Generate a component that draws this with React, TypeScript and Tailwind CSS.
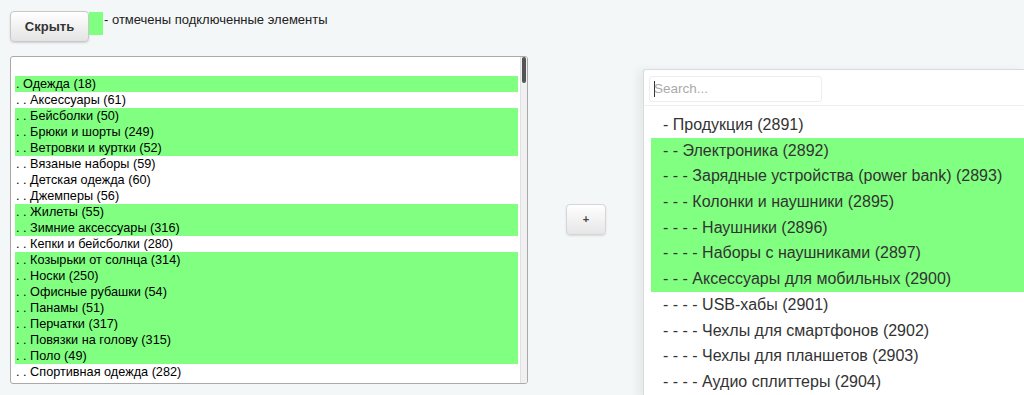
import React from 'react';

const leftItems: { label: string; on: boolean }[] = [
  { label: '. Одежда (18)', on: true },
  { label: '. . Аксессуары (61)', on: false },
  { label: '. . Бейсболки (50)', on: true },
  { label: '. . Брюки и шорты (249)', on: true },
  { label: '. . Ветровки и куртки (52)', on: true },
  { label: '. . Вязаные наборы (59)', on: false },
  { label: '. . Детская одежда (60)', on: false },
  { label: '. . Джемперы (56)', on: false },
  { label: '. . Жилеты (55)', on: true },
  { label: '. . Зимние аксессуары (316)', on: true },
  { label: '. . Кепки и бейсболки (280)', on: false },
  { label: '. . Козырьки от солнца (314)', on: true },
  { label: '. . Носки (250)', on: true },
  { label: '. . Офисные рубашки (54)', on: true },
  { label: '. . Панамы (51)', on: true },
  { label: '. . Перчатки (317)', on: true },
  { label: '. . Повязки на голову (315)', on: true },
  { label: '. . Поло (49)', on: true },
  { label: '. . Спортивная одежда (282)', on: false },
];

const rightItems: { label: string; on: boolean }[] = [
  { label: '- Продукция (2891)', on: false },
  { label: '- - Электроника (2892)', on: true },
  { label: '- - - Зарядные устройства (power bank) (2893)', on: true },
  { label: '- - - Колонки и наушники (2895)', on: true },
  { label: '- - - - Наушники (2896)', on: true },
  { label: '- - - - Наборы с наушниками (2897)', on: true },
  { label: '- - - Аксессуары для мобильных (2900)', on: true },
  { label: '- - - - USB-хабы (2901)', on: false },
  { label: '- - - - Чехлы для смартфонов (2902)', on: false },
  { label: '- - - - Чехлы для планшетов (2903)', on: false },
  { label: '- - - - Аудио сплиттеры (2904)', on: false },
];

export default function App() {
  return (
    <div
      className="w-[1024px] h-[395px] overflow-hidden bg-[#f4f7f7] relative"
      style={{ fontFamily: '"Liberation Sans", Arial, sans-serif' }}
    >
      {/* Легенда */}
      <div className="flex items-start pt-[11px] pl-[10px]">
        <button className="w-[79px] h-[31px] rounded-[4px] border border-[#c8c8c8] bg-gradient-to-b from-white to-[#e4e4e4] shadow-[0_1px_2px_rgba(0,0,0,0.15)] text-[13px] font-bold text-[#333]">
          Скрыть
        </button>
        <div className="w-[14px] h-[23px] mt-[1px] bg-[#80ff80]" />
        <div className="text-[13px] text-[#222] leading-[16px] pt-[1px] pl-[1px]">
          - отмечены подключенные элементы
        </div>
      </div>

      <div className="flex items-start mt-[14px]">
        {/* Левый список */}
        <div className="ml-[10px] w-[518px] h-[328px] bg-white border border-[#a9a9a9] rounded-[3px] flex overflow-hidden">
          <div className="flex-1 pt-[19px] pl-[4px] pr-[2px]">
            {leftItems.map((item) => (
              <div
                key={item.label}
                className={`h-[16px] leading-[16px] text-[12.7px] text-black pl-[1px] ${
                  item.on ? 'bg-[#80ff80]' : ''
                }`}
              >
                {item.label}
              </div>
            ))}
          </div>
          <div className="w-[7px] bg-[#f0f0f0] border-l border-[#e0e0e0] flex justify-center">
            <div className="w-[4px] h-[26px] bg-[#555] rounded-[2px]" />
          </div>
        </div>

        {/* Кнопка добавления */}
        <div className="ml-[38px] mt-[148px]">
          <button className="w-[40px] h-[31px] rounded-[4px] border border-[#d6d6d6] bg-gradient-to-b from-white to-[#e6e6e6] shadow-[0_1px_2px_rgba(0,0,0,0.12)] text-[11px] font-bold text-[#444] leading-none">
            +
          </button>
        </div>

        {/* Выпадающий список */}
        <div className="ml-[37px] mt-[13px] flex-1 h-[330px] bg-white border-l border-t border-[#d8dcdc] rounded-tl-[3px] shadow-[-6px_0_8px_rgba(0,0,0,0.05)]">
          <div className="pt-[6px] pl-[5px] pb-[3px] border-b border-[#eef0f0]">
            <div className="w-[173px] h-[26px] border border-[#eceeee] rounded-[3px] flex items-center pl-[4px]">
              <span className="w-[1px] h-[16px] bg-[#333]" />
              <span className="text-[13.5px] text-[#aaa] -ml-[1px]">Search...</span>
            </div>
          </div>
          <div className="pt-[6px] pl-[7px]">
            {rightItems.map((item) => (
              <div
                key={item.label}
                className={`h-[25.7px] leading-[25.7px] text-[16px] text-[#333] pl-[12px] whitespace-nowrap ${
                  item.on ? 'bg-[#80ff80]' : ''
                }`}
              >
                {item.label}
              </div>
            ))}
          </div>
        </div>
      </div>
    </div>
  );
}
